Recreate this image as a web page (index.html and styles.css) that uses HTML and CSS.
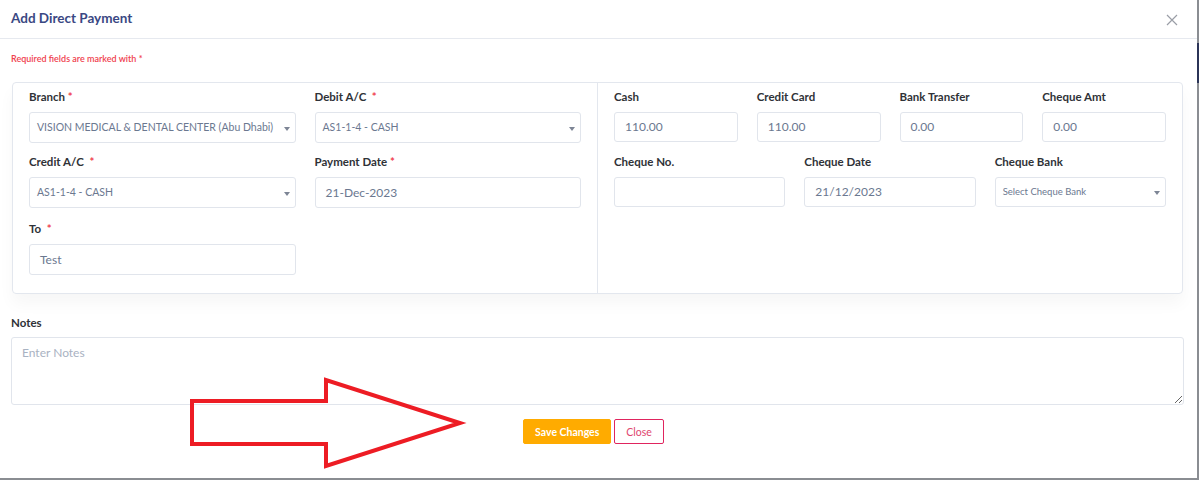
FILE: index.html
```html
<!DOCTYPE html>
<html>
<head>
<meta charset="utf-8">
<link rel="stylesheet" href="styles.css">
</head>
<body>
<div class="modal">
  <div class="modal-header">
    <div class="modal-title">Add Direct Payment</div>
    <svg class="close-x" width="12" height="12" viewBox="0 0 12 12"><path d="M1 1L11 11M11 1L1 11" stroke="#9a9ea6" stroke-width="1.2" fill="none"/></svg>
  </div>
  <div class="modal-body">
    <div class="req-note">Required fields are marked with *</div>
    <div class="card">
      <div class="half left-half">
        <div class="field">
          <label>Branch <span class="star">*</span></label>
          <div class="control select">VISION MEDICAL &amp; DENTAL CENTER (Abu Dhabi)<span class="caret"></span></div>
        </div>
        <div class="field">
          <label>Debit A/C &nbsp;<span class="star">*</span></label>
          <div class="control select">AS1-1-4 - CASH<span class="caret"></span></div>
        </div>
        <div class="field">
          <label>Credit A/C &nbsp;<span class="star">*</span></label>
          <div class="control select">AS1-1-4 - CASH<span class="caret"></span></div>
        </div>
        <div class="field">
          <label>Payment Date <span class="star">*</span></label>
          <div class="control">21-Dec-2023</div>
        </div>
        <div class="field field-to">
          <label>To &nbsp;<span class="star">*</span></label>
          <div class="control">Test</div>
        </div>
      </div>
      <div class="half right-half">
        <div class="grid4">
          <div class="field"><label>Cash</label><div class="control short">110.00</div></div>
          <div class="field"><label>Credit Card</label><div class="control short">110.00</div></div>
          <div class="field"><label>Bank Transfer</label><div class="control short">0.00</div></div>
          <div class="field"><label>Cheque Amt</label><div class="control short">0.00</div></div>
        </div>
        <div class="grid3">
          <div class="field"><label>Cheque No.</label><div class="control short"></div></div>
          <div class="field"><label>Cheque Date</label><div class="control short">21/12/2023</div></div>
          <div class="field"><label>Cheque Bank</label><div class="control short select small">Select Cheque Bank<span class="caret"></span></div></div>
        </div>
      </div>
    </div>
    <div class="notes">
      <label>Notes</label>
      <textarea placeholder="Enter Notes"></textarea>
    </div>
    <div class="actions">
      <button class="btn save">Save Changes</button>
      <button class="btn close">Close</button>
    </div>
  </div>
</div>
<div class="scroll-thumb"></div>
<svg class="arrow" width="1199" height="480" viewBox="0 0 1199 480">
  <polygon points="192,401 326,401 326,380 460,423 326,466 326,444 192,444" fill="none" stroke="#ed1c24" stroke-width="4" stroke-linejoin="miter"/>
</svg>
</body>
</html>
```
FILE: styles.css
```css
html, body {
  margin: 0;
  padding: 0;
}
body {
  width: 1199px;
  height: 480px;
  background: #8a8d92;
  font-family: Lato, "Noto Sans", sans-serif;
  position: relative;
  overflow: hidden;
}
.modal {
  width: 1197px;
  height: 478px;
  background: #fff;
}
.modal-header {
  height: 39px;
  border-bottom: 1px solid #e6e9ef;
  display: flex;
  align-items: center;
  justify-content: space-between;
  padding: 0 19px 0 11px;
  box-sizing: border-box;
}
.modal-title {
  font-size: 13.5px;
  font-weight: 700;
  color: #3a4883;
  margin-top: -2px;
}
.close-x {
  margin-top: 1px;
}
.modal-body {
  padding: 0 13px 0 11px;
}
.req-note {
  font-size: 9px;
  font-weight: 600;
  color: #f0424f;
  margin-top: 14px;
  height: 12px;
  line-height: 12px;
}
.card {
  margin-top: 17px;
  margin-left: 1px;
  width: 1171px;
  box-sizing: border-box;
  border: 1px solid #e3e7ee;
  border-radius: 4px;
  display: flex;
  box-shadow: 0 10px 16px rgba(0,0,0,0.035);
}
.half {
  flex: 1;
  padding: 6px 16px 18px 16px;
}
.left-half {
  border-right: 1px solid #e3e7ee;
  display: grid;
  grid-template-columns: 1fr 1fr;
  column-gap: 19px;
  row-gap: 11px;
  align-content: start;
}
.field-to {
  margin-top: 2px;
}
.field label {
  display: block;
  font-size: 11.5px;
  font-weight: 700;
  color: #2f3237;
  line-height: 16px;
  margin-bottom: 7px;
}
.star {
  color: #f0424f;
}
.control {
  height: 31px;
  box-sizing: border-box;
  border: 1px solid #e1e5ec;
  border-radius: 3px;
  font-size: 12px;
  color: #6b7890;
  line-height: 29px;
  padding: 0 10px;
  position: relative;
  white-space: nowrap;
}
.control.select {
  padding-left: 7px;
  font-size: 10.5px;
}
.control.small {
  font-size: 9.5px;
}
.control.short {
  height: 30px;
  line-height: 28px;
}
.caret {
  position: absolute;
  right: 5px;
  top: 50%;
  margin-top: -1px;
  border-left: 3px solid transparent;
  border-right: 3px solid transparent;
  border-top: 4px solid #7d8595;
}
.right-half {
  display: flex;
  flex-direction: column;
  gap: 12px;
}
.grid4 {
  display: grid;
  grid-template-columns: repeat(4, 1fr);
  column-gap: 19px;
}
.grid3 {
  display: grid;
  grid-template-columns: repeat(3, 1fr);
  column-gap: 19px;
}
.notes {
  margin-top: 21px;
}
.notes label {
  display: block;
  font-size: 11.5px;
  font-weight: 700;
  color: #2f3237;
  line-height: 16px;
  margin-bottom: 6px;
}
.notes textarea {
  display: block;
  width: 1173px;
  height: 68px;
  box-sizing: border-box;
  border: 1px solid #e1e5ec;
  border-radius: 3px;
  font-family: Lato, "Noto Sans", sans-serif;
  font-size: 12px;
  padding: 7px 10px;
  color: #6b7890;
  resize: vertical;
  margin: 0;
}
.notes textarea::placeholder {
  color: #a9b2c2;
}
.actions {
  display: flex;
  justify-content: center;
  gap: 3px;
  margin-top: 14px;
  padding-right: 8px;
}
.btn {
  font-family: Lato, "Noto Sans", sans-serif;
  font-size: 10.5px;
  height: 25px;
  border-radius: 2px;
  padding: 0 11px;
  cursor: pointer;
}
.btn.save {
  background: #ffab00;
  border: 1px solid #ffab00;
  color: #fff;
  font-weight: 700;
}
.btn.close {
  background: #fff;
  border: 1px solid #e0245e;
  color: #e0456e;
  padding: 0 11px;
}
.scroll-thumb {
  position: absolute;
  right: 0;
  top: 43px;
  width: 2px;
  height: 40px;
  background: #2b3457;
}
.arrow {
  position: absolute;
  left: 0;
  top: 0;
  pointer-events: none;
}
```
